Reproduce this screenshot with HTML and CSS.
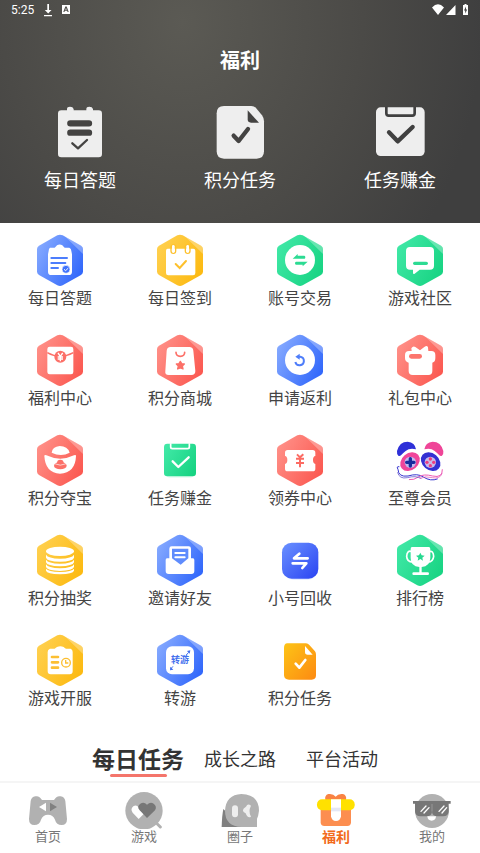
FILE: index.html
```html
<!DOCTYPE html>
<html lang="zh-CN">
<head>
  <meta charset="UTF-8" />
  <meta name="viewport" content="width=device-width, initial-scale=1.0"/>
  <title>福利</title>
  <link rel="stylesheet" href="styles.css">
</head>
<body>
  <!-- shared gradients and the hexagon badge -->
  <svg class="defs" width="0" height="0" aria-hidden="true">
    <defs>
      <linearGradient id="blue" x1="0" y1="0.2" x2="1" y2="0.8"><stop offset="0" stop-color="#86aaff"/><stop offset="1" stop-color="#2e65fb"/></linearGradient>
      <linearGradient id="yellow" x1="0" y1="0.2" x2="1" y2="0.8"><stop offset="0" stop-color="#ffd04f"/><stop offset="1" stop-color="#fcb90f"/></linearGradient>
      <linearGradient id="green" x1="0" y1="0.2" x2="1" y2="0.8"><stop offset="0" stop-color="#40e8a6"/><stop offset="1" stop-color="#17d382"/></linearGradient>
      <linearGradient id="red" x1="0" y1="0.2" x2="1" y2="0.8"><stop offset="0" stop-color="#ff9088"/><stop offset="1" stop-color="#fb574f"/></linearGradient>
      <linearGradient id="indigo" x1="0" y1="0" x2="1" y2="1"><stop offset="0" stop-color="#6a91ff"/><stop offset="1" stop-color="#2a43f2"/></linearGradient>
      <linearGradient id="orange" x1="0" y1="0" x2="1" y2="1"><stop offset="0" stop-color="#fdc416"/><stop offset="1" stop-color="#fd8a12"/></linearGradient>
      <g id="hex">
        <path d="M172 31q8-4 16 0l55 31q6 4 6 10v68q0 6-6 10l-55 31q-8 4-16 0l-55-31q-6-4-6-10V72q0-6 6-10z"/>
        <path d="M196 35l47 27q6 4 6 10v15z" fill="#fff" fill-opacity="0.3"/>
      </g>
    </defs>
  </svg>

  <header class="hero">
    <div class="status">
      <span class="clock">5:25</span>
      <svg width="30" height="14" viewBox="0 0 30 14" fill="#fff">
        <path d="M4.300 1h1.700v6h2.500L5.200 10.500 1.800 7h2.500zM1 12h8v1.300H1z"/>
        <path fill-rule="evenodd" d="M19 2h8v9h-8zM22.300 3.500L20.300 9h1.100l.5-1.300h2.200l.5 1.300h1.100l-2-5.500zM23 4.900l.7 1.900h-1.400z"/>
      </svg>
      <svg class="signal" width="38" height="14" viewBox="0 0 38 14" fill="#fff">
        <path d="M1 4.500Q7-1.800 13 4.500L7 12zM15 12L24.500 2v10zM32 2h1.500V1h2v1H37v10h-5z"/>
        <path d="M35 3.500l-2 4h1.200v3l2-4H35z" fill="#444"/>
      </svg>
    </div>
    <h1>福利</h1>
    <nav class="shortcuts">
      <a href="#">
        <svg viewBox="150 318 180 162" fill="#eee">
          <path d="M184 331h17v-4q0-7 9-7t11 7v4h38v-4q0-7 9-7t11 7v4h17q10 0 10 10v121q0 10-10 10H184q-10 0-10-10V341q0-10 10-10z"/>
          <g stroke="#444342" stroke-linecap="round" stroke-linejoin="round" fill="none"><path d="M211 370h56M211 398h56" stroke-width="19"/><path d="M217 430l17 15 27-25" stroke-width="7"/></g>
        </svg>
        <span>每日答题</span>
      </a>
      <a href="#">
        <svg viewBox="630 318 180 162" fill="#eee">
          <path d="M672 318h82q8 0 14 6l18 22q6 8 6 18v90q0 22-22 22h-98q-22 0-22-22V340q0-22 22-22z"/>
          <path d="M743 331l34 37h-24q-10 0-10-10z" fill="#444342"/>
          <path d="M701 407l15 16 28-36" fill="none" stroke="#444342" stroke-width="13" stroke-linecap="round" stroke-linejoin="round"/>
        </svg>
        <span>积分任务</span>
      </a>
      <a href="#">
        <svg viewBox="1110 318 180 162" fill="#eee">
          <rect x="1128" y="322" width="146" height="146" rx="14"/>
          <g stroke="#404040" fill="none" stroke-linejoin="round"><path d="M1159 320v20q0 7 7 7h71q7 0 7-7v-20" stroke-width="8"/><path d="M1167 397l26 27 45-43" stroke-width="13" stroke-linecap="round"/></g>
        </svg>
        <span>任务赚金</span>
      </a>
    </nav>
  </header>

  <main>
    <div class="grid">
      <a href="#">
        <svg viewBox="102 27 156 156" fill="#fff">
          <use href="#hex" fill="url(#blue)"/>
          <path d="M150 68h14q4-3 7-7 8-5 16 0 3 4 7 7h14q6 3 6 10l2 10v52q0 10-10 10h-52q-10 0-10-10V88l2-10q0-7 4-10z"/>
          <path d="M154 99h47M154 114h42M154 129h20" stroke="#4c7dfc" stroke-width="6" stroke-linecap="round"/>
          <circle cx="198" cy="133" r="12" fill="#3f72fc" stroke="#fff" stroke-width="2"/><path d="M192 133l5 4 8-8" fill="none" stroke="#fff" stroke-width="3"/>
        </svg>
        <span>每日答题</span>
      </a>
      <a href="#">
        <svg viewBox="102 27 156 156" fill="#fff">
          <use href="#hex" fill="url(#yellow)"/>
          <path d="M143 71h77q6 0 6 6v67q0 7-7 7h-74q-7 0-7-7V77q0-6 5-6z"/>
          <g stroke="#fdc02c" fill="none"><rect x="153" y="60" width="14" height="25" rx="7" stroke-width="4"/><rect x="196" y="60" width="14" height="25" rx="7" stroke-width="4"/><path d="M167 117l12 12 19-21" stroke-width="6" stroke-linecap="round"/></g>
          <rect x="156" y="60" width="8" height="23" rx="4"/><rect x="199" y="60" width="8" height="23" rx="4"/>
        </svg>
        <span>每日签到</span>
      </a>
      <a href="#">
        <svg viewBox="102 27 156 156" fill="#fff">
          <use href="#hex" fill="url(#green)"/>
          <circle cx="180" cy="105" r="45"/>
          <path d="M158 101l15-14v5h20q3 0 3 5t-3 4zM203 110l-15 14v-5h-20q-3 0-3-4t3-5z" fill="#2cdb93"/>
        </svg>
        <span>账号交易</span>
      </a>
      <a href="#">
        <svg viewBox="102 27 156 156" fill="#fff">
          <use href="#hex" fill="url(#green)"/>
          <path d="M150 66h60q12 0 12 12v44q0 12-12 12h-31l-15 12q-5 3-5-3v-9h-9q-12 0-12-12V78q0-12 12-12z"/>
          <rect x="159" y="110" width="45" height="10" rx="5" fill="#2cdb93"/>
        </svg>
        <span>游戏社区</span>
      </a>

      <a href="#">
        <svg viewBox="102 27 156 156" fill="#fff">
          <use href="#hex" fill="url(#red)"/>
          <rect x="142" y="65" width="78" height="83" rx="7"/>
          <path d="M142 83q38 22 78 0" fill="none" stroke="#fc7068" stroke-width="4"/>
          <circle cx="181" cy="95" r="18" fill="#fc7068"/>
          <path d="M174 84l7 10 7-10M181 94v15M173 96h16M173 102h16" fill="none" stroke="#fff" stroke-width="4"/>
        </svg>
        <span>福利中心</span>
      </a>
      <a href="#">
        <svg viewBox="102 27 156 156" fill="#fff">
          <use href="#hex" fill="url(#red)"/>
          <path d="M152 66h56q11 0 12 11l6 61q0 12-12 12h-68q-12 0-10-12l4-61q1-11 12-11z"/>
          <path d="M168 82q0 12 13 12t13-12" fill="none" stroke="#fc7068" stroke-width="5" stroke-linecap="round"/>
          <path d="M181 109l4 7 8 1-6 6 2 9-8-3-8 3 2-9-6-6 8-1z" fill="#fc7068" stroke="#fc7068" stroke-width="4" stroke-linejoin="round"/>
        </svg>
        <span>积分商城</span>
      </a>
      <a href="#">
        <svg viewBox="102 27 156 156" fill="#fff">
          <use href="#hex" fill="url(#blue)"/>
          <circle cx="180" cy="105" r="45"/>
          <path d="M174 95h7a13 13 0 1 1-15 16" fill="none" stroke="#4e7dfa" stroke-width="6"/>
          <path d="M166 95l13-9v18z" fill="#4e7dfa"/>
        </svg>
        <span>申请返利</span>
      </a>
      <a href="#">
        <svg viewBox="102 27 156 156" fill="#fff">
          <use href="#hex" fill="url(#red)"/>
          <path d="M147 78h8l-1-8q5-8 12-4l14 10 14-11q7-5 10 2l1 11h9q12 0 12 12v9q0 12-9 14v25q0 12-12 12h-47q-12 0-12-12v-25q-11-3-11-14v-9q0-12 12-12z"/>
          <rect x="147" y="87" width="39" height="14" rx="7" fill="#fd756d"/>
        </svg>
        <span>礼包中心</span>
      </a>

      <a href="#">
        <svg viewBox="102 27 156 156" fill="#fff">
          <use href="#hex" fill="url(#red)"/>
          <path d="M155 83q2-18 24-20 24 0 30 20-26 14-54 0z"/>
          <path d="M133 93q0-5 6-2 42 20 83 0 6-3 6 2-2 51-48 53-44-2-47-53z"/>
          <ellipse cx="181" cy="122" rx="19" ry="11" fill="#fc7068"/><circle cx="181" cy="114" r="10" fill="#fc7068"/><path d="M163 116q18 9 36 0" fill="none" stroke="#fff" stroke-width="2"/>
        </svg>
        <span>积分夺宝</span>
      </a>
      <a href="#">
        <svg viewBox="102 27 156 156" fill="none">
          <rect x="138" y="66" width="84" height="92" rx="10" fill="#baf5d9" opacity="0.4"/>
          <rect x="132" y="56" width="96" height="98" rx="10" fill="url(#green)"/>
          <path d="M152 55v11q0 5 5 5h46q5 0 5-5V55" stroke="#fff" stroke-width="5"/>
          <path d="M158 109l17 17 31-29" stroke="#fff" stroke-width="7" stroke-linecap="round" stroke-linejoin="round"/>
        </svg>
        <span>任务赚金</span>
      </a>
      <a href="#">
        <svg viewBox="102 27 156 156" fill="#fff">
          <use href="#hex" fill="url(#red)"/>
          <path d="M143 75h75q8 0 8 8v10q-7 1-7 12t7 12v14q0 8-8 8h-75q-8 0-8-8v-14q7-1 7-12t-7-12V83q0-8 8-8z"/>
          <path d="M171 88l9 9 10-9M180 97v30M168 101h24M168 114h24" fill="none" stroke="#fc6b63" stroke-width="6"/>
        </svg>
        <span>领券中心</span>
      </a>
      <a href="#">
        <svg viewBox="102 27 156 156">
          <path d="M115 92q-5-3-4-14 7-28 32-28 22 2 25 23-19-5-31 5-9 7-14 13-4 4-8 1z" fill="#2e30d8"/>
          <path d="M246 92q5-3 4-14-7-28-32-28-22 2-25 23 19-5 31 5 9 7 14 13 4 4 8 1z" fill="#ef4598"/>
          <ellipse cx="150" cy="110" rx="32" ry="25" transform="rotate(-40 150 110)" fill="#f0459a"/>
          <ellipse cx="212" cy="110" rx="32" ry="25" transform="rotate(40 212 110)" fill="#3430d3"/>
          <circle cx="151" cy="112" r="17" fill="#c1baf0"/><path d="M151 101v22M140 112h22" stroke="#192a9d" stroke-width="10" stroke-linecap="round"/>
          <circle cx="211" cy="112" r="17" fill="#c9b9e9"/><g fill="#ed3c81"><circle cx="211" cy="102" r="5"/><circle cx="211" cy="122" r="5"/><circle cx="201" cy="112" r="5"/><circle cx="221" cy="112" r="5"/></g>
          <g fill="none" stroke-linecap="round"><path d="M117 125q-9-2-3 8 1 24 30 20 29-9 46 3 22 14 42 6" stroke="#3735d0" stroke-width="3"/><path d="M247 134q1 26-29 19-27-7-41 2-16 11-29 9" stroke="#ef59b3" stroke-width="3"/><path d="M113 143q5 20 29 15 25-7 41 2" stroke="#4538c2" stroke-width="2"/><path d="M246 146q-6 17-29 12-22-6-37 2" stroke="#df4ab4" stroke-width="2"/></g>
        </svg>
        <span>至尊会员</span>
      </a>

      <a href="#">
        <svg viewBox="102 27 156 156" fill="#fff">
          <use href="#hex" fill="url(#yellow)"/>
          <ellipse cx="180" cy="79" rx="42" ry="14"/>
          <path d="M138 89q6 11 42 12 36-1 42-12v9q-3 11-42 12-39-1-42-12zM138 104q6 11 42 12 36-1 42-12v8q-3 11-42 12-39-1-42-12zM138 118q6 11 42 12 36-1 42-12v8q-3 11-42 12-39-1-42-12zM138 131q6 9 42 10 36-1 42-10v6q-3 10-42 11-39-1-42-11z"/>
        </svg>
        <span>积分抽奖</span>
      </a>
      <a href="#">
        <svg viewBox="102 27 156 156" fill="#fff">
          <use href="#hex" fill="url(#blue)"/>
          <path d="M155 64h51q7 0 7 7v29h6q4 0 4 5v33q0 9-9 9h-68q-9 0-9-9v-33q0-5 4-5h7V71q0-7 7-7z"/>
          <path d="M156 71h49v29l-23 19-26-19z" fill="#5f8cfd"/>
          <path d="M166 84h28M166 97h28" stroke="#fff" stroke-width="6" stroke-linecap="round"/>
        </svg>
        <span>邀请好友</span>
      </a>
      <a href="#">
        <svg viewBox="102 27 156 156">
          <rect x="133" y="66" width="98" height="99" rx="28" fill="#cddbfe" opacity="0.5"/>
          <rect x="126" y="53" width="109" height="108" rx="29" fill="url(#indigo)"/>
          <path d="M203 100h-41l16-14M158 115h41l-12 14" fill="none" stroke="#fff" stroke-width="8" stroke-linecap="round" stroke-linejoin="round"/>
        </svg>
        <span>小号回收</span>
      </a>
      <a href="#">
        <svg viewBox="102 27 156 156" fill="#fff">
          <use href="#hex" fill="url(#green)"/>
          <path d="M156 66h50q5 0 5 6v27q-1 25-26 27v16h18q4 0 4 4t-4 4h-42q-4 0-4-4t4-4h17v-16q-26-2-26-27V72q0-6 4-6z"/>
          <path d="M156 80q-15-6-16 14 1 18 20 17M207 80q13-5 14 14-2 18-19 17" fill="none" stroke="#fff" stroke-width="5"/>
          <path d="M181 83l4 8 9 1-7 6 2 9-8-5-8 5 2-9-7-6 9-1z" fill="#26d990"/>
        </svg>
        <span>排行榜</span>
      </a>

      <a href="#">
        <svg viewBox="102 27 156 156" fill="#fff">
          <use href="#hex" fill="url(#yellow)"/>
          <path d="M150 71h14q4-3 7-5 10-5 20 0 3 3 7 5h14q6 3 6 10v58q0 9-9 9h-57q-9 0-9-9V81q0-7 7-10z"/>
          <path d="M156 96h18M156 112h18M156 128h18" stroke="#fcbf32" stroke-width="8" stroke-linecap="round"/>
          <circle cx="198" cy="113" r="13" fill="#fff" stroke="#fcbf32" stroke-width="4"/><path d="M197 105v9h8" fill="none" stroke="#fcbf32" stroke-width="4"/>
        </svg>
        <span>游戏开服</span>
      </a>
      <a href="#">
        <svg viewBox="102 27 156 156" fill="#fff">
          <use href="#hex" fill="url(#blue)"/>
          <rect x="138" y="64" width="84" height="84" rx="18"/>
          <text class="badge-text" x="180" y="115" text-anchor="middle">转游</text>
          <path d="M198 91l8-9M159 124l-7 8" stroke="#426fed" stroke-width="3"/><path d="M201 78l10-2-2 10zM151 125l-1 11 10-2z" fill="#426fed"/>
        </svg>
        <span>转游</span>
      </a>
      <a href="#">
        <svg viewBox="102 27 156 156" fill="#fff">
          <path d="M142 55h56q6 0 10 5l17 19q3 4 3 10v62q0 13-13 13h-68q-14 0-15-13V69q0-14 10-14z" fill="url(#orange)"/>
          <path d="M195 63l23 26h-15q-8 0-8-8z"/>
          <path d="M167 116l11 12 18-23" fill="none" stroke="#fff" stroke-width="8" stroke-linecap="round" stroke-linejoin="round"/>
        </svg>
        <span>积分任务</span>
      </a>
    </div>

    <div class="tabs">
      <button class="tab active" type="button">每日任务</button>
      <button class="tab" type="button">成长之路</button>
      <button class="tab" type="button">平台活动</button>
    </div>
  </main>

  <nav class="tabbar">
    <a href="#">
      <svg viewBox="84 183 120 114" fill="#b1b1b1">
        <path d="M106 199q12-3 20 11h36q8-14 20-11 12 2 14 14l5 54q0 18-16 18t-20-16q-6-15-21-15t-21 15q-4 16-20 16t-16-18l5-54q2-12 14-14z"/>
        <path d="M117 231l21-13v26z" fill="#fff"/><path d="M171 231l-21-13v26z" fill="#808080"/>
      </svg>
      <span>首页</span>
    </a>
    <a href="#">
      <svg viewBox="372 183 120 114">
        <circle cx="432" cy="242" r="56" fill="#b1b1b1"/><path d="M472 282l9 9" stroke="#b1b1b1" stroke-width="9" stroke-linecap="round"/>
        <path d="M416 267l-18-19q-8-11 2-19 9-6 16 3 10-9 19-1 8 9-1 18z" fill="#fff"/>
        <path d="M441 264l-22-23q-10-12 2-20 11-6 20 3 10-9 20-3 11 8 4 20z" fill="#777"/>
      </svg>
      <span>游戏</span>
    </a>
    <a href="#">
      <svg viewBox="-60 183 120 114">
        <path d="M-50 237q-4 18-5 54H5z" fill="#808080"/>
        <path d="M4 192q53 2 53 50-2 17-6 24v25H5q-50-2-50-49 3-48 49-50z" fill="#b1b1b1"/>
        <rect x="-24" y="226" width="18" height="36" rx="9" fill="#eee"/>
        <path d="M33 227q-10-9-15 3-18 11-1 20 6 16 16 10-9-16 0-33z" fill="#eee"/>
      </svg>
      <span>圈子</span>
    </a>
    <a class="active" href="#">
      <svg viewBox="228 183 120 114">
        <path d="M256 210q-3-14 9-18 15-2 22 8 7-10 22-8 12 4 9 18z" fill="#f98343"/>
        <path d="M242 235h91v42q0 11-11 11h-69q-11 0-11-11z" fill="#fc8e50"/>
        <rect x="231" y="208" width="113" height="33" rx="15" fill="#ffe100"/>
        <path d="M273 208h30v51q-2 14-15 14t-15-14z" fill="#fff"/><path d="M273 233h30v11h-30z" fill="#e4e7f5"/>
      </svg>
      <span>福利</span>
    </a>
    <a href="#">
      <svg viewBox="516 183 120 114">
        <circle cx="576" cy="243" r="51" fill="#b1b1b1"/>
        <path d="M519 213h113v8h-6v23q0 15-17 15h-17q-14 0-16-13-2 13-16 13h-18q-17 0-17-15v-23h-6z" fill="#777"/>
        <path d="M543 244l15-16M552 249l15-16M597 244l15-16M606 249l14-16" stroke="#fff" stroke-width="4" stroke-linecap="round"/><path d="M576 222v23" stroke="#aaa" stroke-width="2"/>
        <path d="M562 259h26q-1 13-13 13t-13-13z" fill="#fff"/>
      </svg>
      <span>我的</span>
    </a>
  </nav>
</body>
</html>
```
FILE: styles.css
```css
* { box-sizing: border-box; }
body { margin: 0; min-height: 100vh; display: flex; flex-direction: column; background: #fff; color: #444; font-family: "Noto Sans CJK SC", sans-serif; }
a { color: inherit; text-decoration: none; }
svg { display: block; flex: none; }
.defs { position: absolute; }

.hero { padding-bottom: 31px; color: #fff; background: radial-gradient(ellipse 300px 350px at 38% 10%, #5b5a54, #4b4a47 60%, #3f3f3f); }
.status { display: flex; align-items: center; height: 20px; padding: 0 11px; }
.clock { width: 32px; font: 400 12px/20px Roboto, sans-serif; }
.signal { margin-left: auto; }
h1 { margin: 24px 0; font-size: 20px; line-height: 32px; font-weight: bold; text-align: center; }
.shortcuts { display: grid; grid-template-columns: repeat(3, 1fr); padding-top: 6px; }
.shortcuts a { display: flex; flex-direction: column; align-items: center; gap: 6px; font-size: 18px; line-height: 26px; }
.shortcuts svg { width: 60px; height: 54px; }

main { flex: 1; }
.grid { display: grid; grid-template-columns: repeat(4, 1fr); row-gap: 26px; padding-top: 11px; }
.grid a { display: flex; flex-direction: column; align-items: center; font-size: 16px; line-height: 22px; }
.grid svg { width: 52px; height: 52px; }
.badge-text { font-size: 27px; font-weight: bold; fill: #426fed; }

.tabs { display: grid; grid-template-columns: repeat(3, 102px); justify-content: center; margin-top: 33px; }
.tab { display: flex; justify-content: center; align-items: center; height: 36px; padding: 0 0 2px; border: 0; background: none; color: #333; font-family: inherit; font-size: 18px; white-space: nowrap; }
.tab.active { position: relative; font-size: 23px; font-weight: bold; }
.tab.active::after { content: ""; position: absolute; bottom: 0; width: 57px; height: 3px; border-radius: 2px; background: #f4756b; }

.tabbar { display: grid; grid-template-columns: repeat(5, 1fr); height: 72px; padding-top: 8px; border-top: 2px solid #f5f5f5; }
.tabbar a { display: flex; flex-direction: column; align-items: center; color: #777; font-size: 13px; line-height: 14px; }
.tabbar svg { width: 40px; height: 38px; }
.tabbar .active { color: #f26a1b; font-size: 14px; font-weight: bold; }
```
